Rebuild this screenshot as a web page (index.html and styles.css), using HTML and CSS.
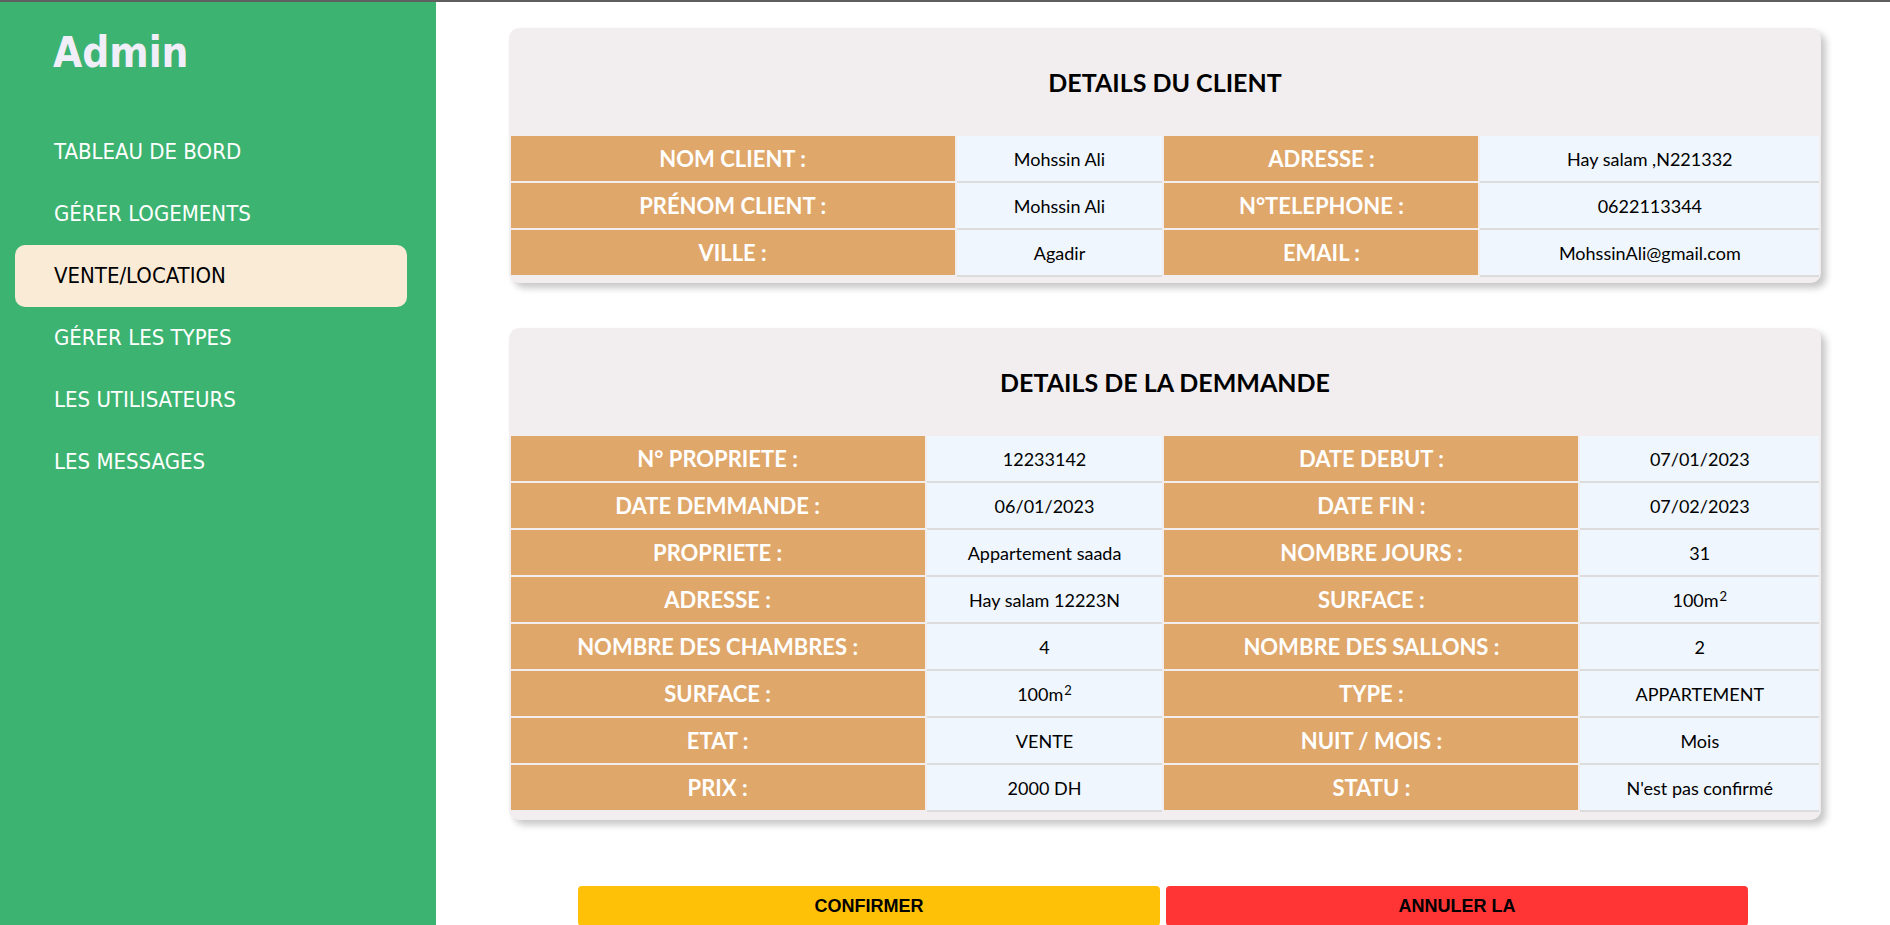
FILE: index.html
```html
<!DOCTYPE html>
<html lang="fr">
<head>
<meta charset="utf-8">
<title>Admin - Vente/Location</title>
<link rel="stylesheet" href="styles.css">
</head>
<body>
<div class="topbar"></div>
<div class="layout">
  <aside class="sidebar">
    <h1 class="brand">Admin</h1>
    <nav class="nav">
      <a class="nav-item" href="#">TABLEAU DE BORD</a>
      <a class="nav-item" href="#">GÉRER LOGEMENTS</a>
      <a class="nav-item active" href="#">VENTE/LOCATION</a>
      <a class="nav-item" href="#">GÉRER LES TYPES</a>
      <a class="nav-item" href="#">LES UTILISATEURS</a>
      <a class="nav-item" href="#">LES MESSAGES</a>
    </nav>
  </aside>
  <main class="main">
    <section class="card">
      <div class="card-head"><h2 class="card-title">DETAILS DU CLIENT</h2></div>
      <div class="grid grid-client">
        <div class="lbl">NOM CLIENT :</div><div class="val">Mohssin Ali</div>
        <div class="lbl">ADRESSE :</div><div class="val">Hay salam ,N221332</div>
        <div class="lbl">PRÉNOM CLIENT :</div><div class="val">Mohssin Ali</div>
        <div class="lbl">N°TELEPHONE :</div><div class="val">0622113344</div>
        <div class="lbl">VILLE :</div><div class="val">Agadir</div>
        <div class="lbl">EMAIL :</div><div class="val">MohssinAli@gmail.com</div>
      </div>
    </section>
    <section class="card card-second">
      <div class="card-head"><h2 class="card-title">DETAILS DE LA DEMMANDE</h2></div>
      <div class="grid grid-demande">
        <div class="lbl">N° PROPRIETE :</div><div class="val">12233142</div>
        <div class="lbl">DATE DEBUT :</div><div class="val">07/01/2023</div>
        <div class="lbl">DATE DEMMANDE :</div><div class="val">06/01/2023</div>
        <div class="lbl">DATE FIN :</div><div class="val">07/02/2023</div>
        <div class="lbl">PROPRIETE :</div><div class="val">Appartement saada</div>
        <div class="lbl">NOMBRE JOURS :</div><div class="val">31</div>
        <div class="lbl">ADRESSE :</div><div class="val">Hay salam 12223N</div>
        <div class="lbl">SURFACE :</div><div class="val">100m<sup>2</sup></div>
        <div class="lbl">NOMBRE DES CHAMBRES :</div><div class="val">4</div>
        <div class="lbl">NOMBRE DES SALLONS :</div><div class="val">2</div>
        <div class="lbl">SURFACE :</div><div class="val">100m<sup>2</sup></div>
        <div class="lbl">TYPE :</div><div class="val">APPARTEMENT</div>
        <div class="lbl">ETAT :</div><div class="val">VENTE</div>
        <div class="lbl">NUIT / MOIS :</div><div class="val">Mois</div>
        <div class="lbl">PRIX :</div><div class="val">2000 DH</div>
        <div class="lbl">STATU :</div><div class="val">N'est pas confirmé</div>
      </div>
    </section>
    <div class="actions">
      <button class="btn btn-confirm" type="button">CONFIRMER</button>
      <button class="btn btn-cancel" type="button">ANNULER LA</button>
    </div>
  </main>
</div>
</body>
</html>
```
FILE: styles.css
```css
* { box-sizing: border-box; }
html, body { margin: 0; padding: 0; }
body {
  background: #ffffff;
  font-family: "Lato", "Open Sans", sans-serif;
  color: #000;
}
.topbar {
  height: 2px;
  background: #5f5f5f;
}
.layout {
  display: flex;
  min-height: calc(100vh - 2px);
}
.sidebar {
  width: 436px;
  flex: 0 0 436px;
  background: #3cb371;
  padding-top: 30px;
}
.brand {
  margin: 0 0 47px 53px;
  font-family: "DejaVu Sans Condensed", "DejaVu Sans", sans-serif;
  font-weight: bold;
  font-size: 42px;
  line-height: 1;
  color: #f0eef8;
}
.nav {
  display: flex;
  flex-direction: column;
}
.nav-item {
  display: block;
  height: 62px;
  line-height: 62px;
  margin: 0 29px 0 15px;
  padding-left: 39px;
  font-family: "DejaVu Sans Condensed", "DejaVu Sans", sans-serif;
  font-size: 22px;
  color: #ffffff;
  text-decoration: none;
  border-radius: 10px;
}
.nav-item.active {
  background: #faebd7;
  color: #000;
}
.main {
  flex: 1;
  padding-top: 26px;
}
.card {
  width: calc(90% + 4px);
  margin: 0 0 0 5%;
  background: #f2eef0;
  border-radius: 10px;
  box-shadow: 5px 5px 7px rgba(0, 0, 0, 0.22);
  padding: 0 2px 8px;
}
.card-second {
  margin-top: 45px;
  padding-bottom: 10px;
}
.card-head {
  height: 108px;
  display: flex;
  align-items: center;
  justify-content: center;
}
.card-title {
  margin: 0;
  font-family: "Lato", sans-serif;
  font-weight: 700;
  font-size: 25px;
  color: #000;
}
.grid {
  display: grid;
  column-gap: 2px;
  row-gap: 2px;
  grid-auto-rows: 45px;
}
.grid-client {
  grid-template-columns: 444fr 206fr 314fr 339fr;
}
.grid-demande {
  grid-template-columns: 414fr 236fr 414fr 239fr;
}
.lbl {
  background: #e0a76b;
  color: #ffffff;
  font-family: "Lato", sans-serif;
  font-weight: 700;
  font-size: 22px;
  display: flex;
  align-items: center;
  justify-content: center;
}
.val {
  background: #eff6fd;
  color: #000;
  font-family: "Lato", sans-serif;
  font-size: 18px;
  display: flex;
  align-items: center;
  justify-content: center;
  box-shadow: 0 2px 0 #dcdcdc;
}
.val sup {
  font-size: 13px;
  line-height: 0;
  position: relative;
  top: -4px;
  vertical-align: top;
  margin-left: 1px;
}
.actions {
  width: calc(80% + 7px);
  margin: 66px auto 0;
  display: flex;
  gap: 6px;
}
.btn {
  flex: 1;
  height: 40px;
  border: none;
  border-radius: 4px;
  font-family: "Liberation Sans", Arial, sans-serif;
  font-weight: bold;
  font-size: 18px;
  color: #000;
  cursor: pointer;
}
.btn-confirm { background: #ffc107; }
.btn-cancel { background: #ff3535; }
```
